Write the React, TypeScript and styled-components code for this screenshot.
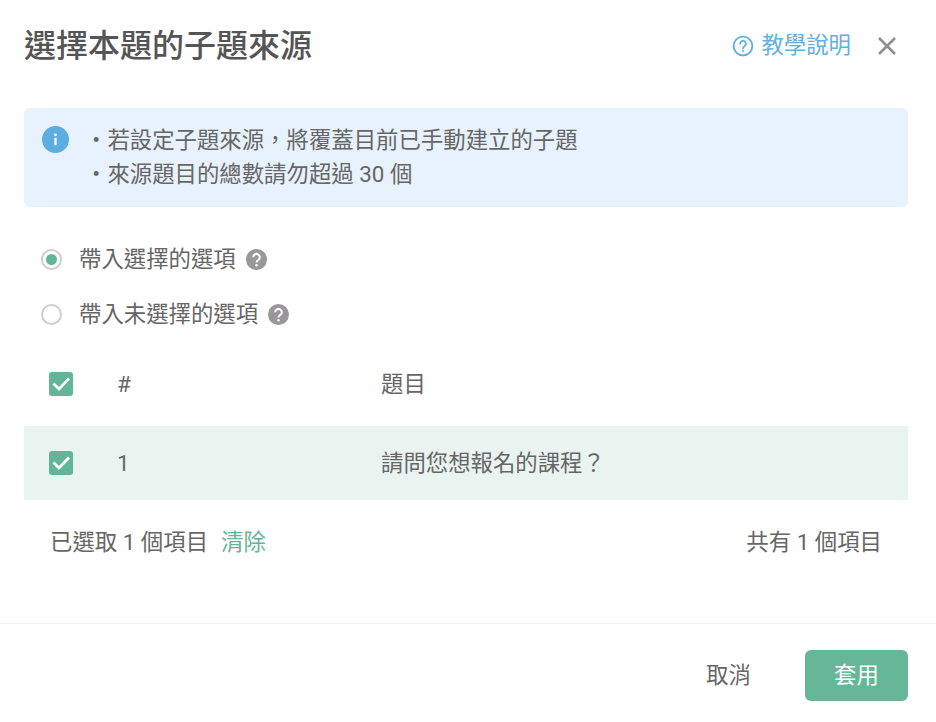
import { FC, ReactNode } from "react";
import styled, { createGlobalStyle } from "styled-components";

const GlobalStyle = createGlobalStyle`
  html, body {
    margin: 0;
    padding: 0;
    background: #fff;
  }

  body {
    font-family: "Roboto", "Noto Sans CJK TC", sans-serif;
    font-size: 22.4px;
    line-height: 33px;
    color: #666;
  }
`;

const HelpIcon: FC = () => (
  <svg width="22" height="22" viewBox="0 0 22 22" fill="none">
    <circle cx="11" cy="11" r="9.4" stroke="#62b0e2" strokeWidth="1.9" />
    <path
      d="M8.1 8.7a2.9 2.9 0 1 1 4.6 2.3c-1 .7-1.7 1.2-1.7 2.4"
      stroke="#62b0e2"
      strokeWidth="1.8"
      strokeLinecap="round"
    />
    <circle cx="11" cy="16" r="1.1" fill="#62b0e2" />
  </svg>
);

const CloseIcon: FC = () => (
  <svg width="20" height="20" viewBox="0 0 20 20" fill="none">
    <path d="M2 2l16 16M18 2L2 18" stroke="#8e8e93" strokeWidth="2.6" />
  </svg>
);

const InfoIcon: FC = () => (
  <svg width="27" height="27" viewBox="0 0 27 27">
    <circle cx="13.5" cy="13.5" r="13.5" fill="#5dade2" />
    <circle cx="13.5" cy="8.8" r="1.4" fill="#fff" />
    <rect x="12.4" y="11.8" width="2.2" height="7.4" rx="0.6" fill="#fff" />
  </svg>
);

const QuestionBadge: FC = () => (
  <svg width="21" height="21" viewBox="0 0 21 21">
    <circle cx="10.5" cy="10.5" r="10.5" fill="#99979a" />
    <path
      d="M7.2 8.2a3.3 3.3 0 1 1 5.2 2.7c-1.2.8-1.9 1.2-1.9 2.5"
      fill="none"
      stroke="#fff"
      strokeWidth="2"
    />
    <circle cx="10.5" cy="16.2" r="1.3" fill="#fff" />
  </svg>
);

const Check: FC = () => (
  <CheckBox>
    <svg width="24" height="24" viewBox="0 0 24 24" fill="none">
      <path d="M4.5 11.5l5.5 5.5L20 6.5" stroke="#fff" strokeWidth="2.7" />
    </svg>
  </CheckBox>
);

const RadioOption: FC<{ checked?: boolean; children: ReactNode }> = ({
  checked,
  children,
}) => (
  <RadioRow>
    <RadioCircle $checked={checked} />
    <RadioLabel>{children}</RadioLabel>
    <QuestionBadge />
  </RadioRow>
);

const App: FC = () => (
  <>
    <GlobalStyle />
    <Dialog>
      <Header>
        <Title>選擇本題的子題來源</Title>
        <HeaderActions>
          <HelpLink>
            <HelpIcon />
            教學說明
          </HelpLink>
          <CloseButton>
            <CloseIcon />
          </CloseButton>
        </HeaderActions>
      </Header>

      <Notice>
        <NoticeIcon>
          <InfoIcon />
        </NoticeIcon>
        <NoticeList>
          <NoticeLine>・若設定子題來源，將覆蓋目前已手動建立的子題</NoticeLine>
          <NoticeLine>・來源題目的總數請勿超過 30 個</NoticeLine>
        </NoticeList>
      </Notice>

      <RadioGroup>
        <RadioOption checked>帶入選擇的選項</RadioOption>
        <RadioOption>帶入未選擇的選項</RadioOption>
      </RadioGroup>

      <TableHead>
        <CheckCell>
          <Check />
        </CheckCell>
        <NumberCell>#</NumberCell>
        <span>題目</span>
      </TableHead>
      <TableRow>
        <CheckCell>
          <Check />
        </CheckCell>
        <NumberCell>1</NumberCell>
        <span>請問您想報名的課程？</span>
      </TableRow>

      <Summary>
        <SummaryLeft>
          已選取 1 個項目
          <ClearLink>清除</ClearLink>
        </SummaryLeft>
        <span>共有 1 個項目</span>
      </Summary>

      <Footer>
        <CancelButton>取消</CancelButton>
        <ApplyButton>套用</ApplyButton>
      </Footer>
    </Dialog>
  </>
);

const Dialog = styled.div`
  width: 936px;
  height: 722px;
  overflow: hidden;
  display: flex;
  flex-direction: column;
  background: #fff;
`;

const Header = styled.div`
  height: 108px;
  padding: 0 38px 17px 24px;
  box-sizing: border-box;
  display: flex;
  align-items: center;
  justify-content: space-between;
`;

const Title = styled.h1`
  margin: 0;
  font-size: 32px;
  font-weight: 500;
  line-height: 40px;
  color: #555;
`;

const HeaderActions = styled.div`
  display: flex;
  align-items: center;
  gap: 25px;
`;

const HelpLink = styled.a`
  display: flex;
  align-items: center;
  gap: 7px;
  color: #62b0e2;
`;

const CloseButton = styled.button`
  width: 22px;
  height: 22px;
  padding: 0;
  border: 0;
  background: none;
  display: flex;
  align-items: center;
  justify-content: center;
`;

const Notice = styled.div`
  height: 99px;
  margin: 0 28px 0 24px;
  padding: 15px 18px;
  box-sizing: border-box;
  display: flex;
  gap: 16px;
  background: #e7f2fc;
  border-radius: 6px;
`;

const NoticeIcon = styled.div`
  flex: none;
  height: 27px;
  margin-top: 3px;
`;

const NoticeList = styled.div`
  display: flex;
  flex-direction: column;
`;

const NoticeLine = styled.div`
  line-height: 34px;
  white-space: nowrap;
`;

const RadioGroup = styled.div`
  margin-top: 36px;
  padding-left: 41px;
  display: flex;
  flex-direction: column;
  gap: 22px;
`;

const RadioRow = styled.label`
  height: 33px;
  display: flex;
  align-items: center;
`;

const RadioCircle = styled.span<{ $checked?: boolean }>`
  flex: none;
  width: 21px;
  height: 21px;
  box-sizing: border-box;
  margin-right: 17px;
  border: 2px solid #cfcfcf;
  border-radius: 50%;
  display: flex;
  align-items: center;
  justify-content: center;

  &::after {
    content: "";
    width: 11px;
    height: 11px;
    border-radius: 50%;
    background: ${({ $checked }) => ($checked ? "#62b598" : "transparent")};
  }
`;

const RadioLabel = styled.span`
  margin-right: 10px;
`;

const TableHead = styled.div`
  margin: 11px 28px 0 24px;
  height: 84px;
  display: flex;
  align-items: center;
`;

const TableRow = styled(TableHead)`
  margin-top: 0;
  height: 74px;
  background: #e9f4f1;
`;

const CheckCell = styled.div`
  width: 93px;
  padding-left: 25px;
  box-sizing: border-box;
  flex: none;
`;

const CheckBox = styled.span`
  width: 24px;
  height: 24px;
  display: block;
  border-radius: 3px;
  background: #62b598;
`;

const NumberCell = styled.span`
  width: 264px;
  flex: none;
`;

const Summary = styled.div`
  margin: 24px 54px 0 50px;
  display: flex;
  justify-content: space-between;
  align-items: center;
  line-height: 36px;
`;

const SummaryLeft = styled.div`
  display: flex;
  gap: 13px;
`;

const ClearLink = styled.a`
  color: #62b598;
`;

const Footer = styled.div`
  margin-top: auto;
  height: 99px;
  box-sizing: border-box;
  padding: 26px 28px 0 0;
  border-top: 1px solid #f0eff2;
  display: flex;
  justify-content: flex-end;
  gap: 43px;
`;

const CancelButton = styled.button`
  width: 67px;
  height: 51px;
  padding: 0;
  border: 0;
  background: none;
  font: inherit;
  color: #666;
`;

const ApplyButton = styled.button`
  width: 103px;
  height: 51px;
  padding: 0;
  border: 0;
  border-radius: 6px;
  background: #66b698;
  font: inherit;
  color: #fff;
`;

export default App;
